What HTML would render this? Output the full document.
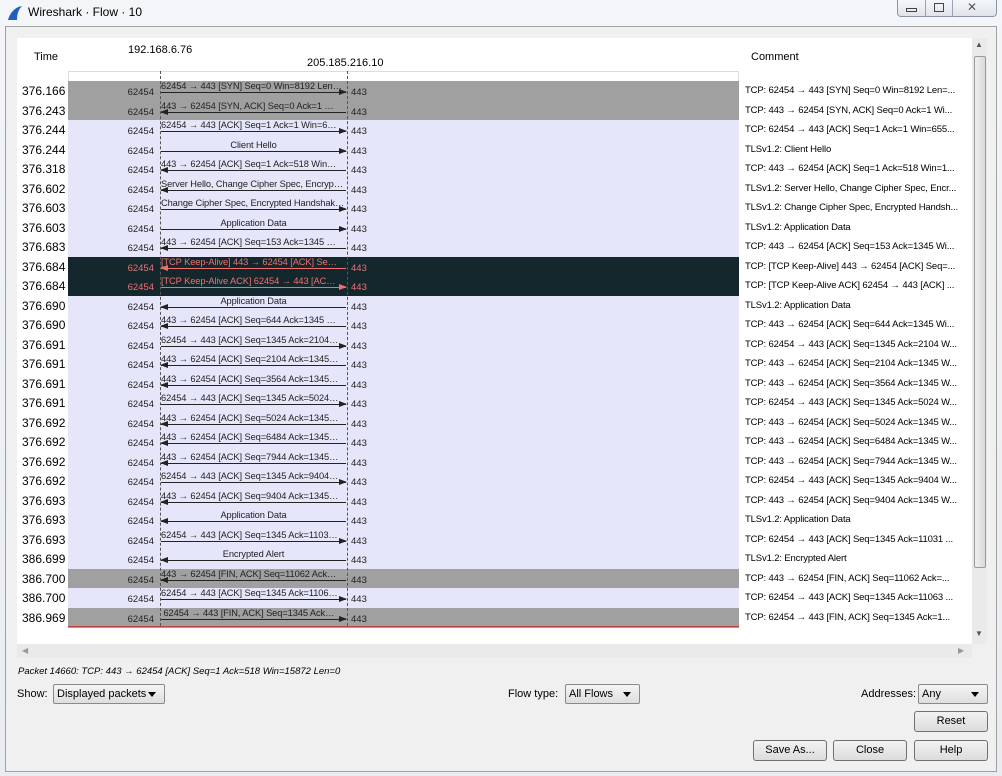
<!DOCTYPE html>
<html><head><meta charset="utf-8"><style>
*{margin:0;padding:0;box-sizing:border-box}
body{width:1002px;height:776px;position:relative;overflow:hidden;background:linear-gradient(#f3f5f8,#e9ecf0);font-family:"Liberation Sans",sans-serif;color:#000}
.abs{position:absolute}
#dlg{position:absolute;left:5px;top:26px;width:992px;height:746px;background:#f0f0f0;border:1px solid #a0a0a0}
#graph{position:absolute;left:17px;top:38px;width:955px;height:606px;background:#fff}
.row{position:absolute;left:0;width:1002px;height:20px}
.band{position:absolute;left:68px;width:671px;top:0;height:20px;background:#e6e6fa}
.g .band{background:#a0a0a0}
.k .band{background:#13272d}
.t{position:absolute;left:22px;top:3px;font-size:12px}
.p1{position:absolute;left:110px;width:44px;text-align:right;top:6px;font-size:9.5px;color:#222}
.p2{position:absolute;left:351px;top:6px;font-size:9.5px;color:#222}
.lb{position:absolute;left:161px;width:185px;top:0;font-size:9.3px;white-space:nowrap;overflow:hidden;color:#222;letter-spacing:-0.1px}
.c .lb{text-align:center}
.ln{position:absolute;left:161px;width:185px;top:11px;height:1px;background:#222}
.ln:after{content:"";position:absolute;top:-3px;border-top:3.5px solid transparent;border-bottom:3.5px solid transparent}
.R .ln:after{right:-1px;border-left:8px solid #222}
.L .ln:after{left:-1px;border-right:8px solid #222}
.k .p1,.k .p2,.k .lb{color:#f07070}
.k .ln{background:#f07070}
.k.R .ln:after{border-left-color:#f07070}
.k.L .ln:after{border-right-color:#f07070}
.cm{position:absolute;left:745px;top:4px;font-size:9.5px;white-space:nowrap;letter-spacing:-0.15px}
.vl{position:absolute;top:71px;height:555px;width:0;border-left:1px dashed #555}
.btn{position:absolute;height:21px;border:1px solid #707070;border-radius:3px;background:linear-gradient(#f2f2f2,#dcdcdc);font-size:11px;text-align:center;line-height:19px}
.cb{position:absolute;height:20px;border:1px solid #8a8a8a;border-radius:2px;background:linear-gradient(#f4f4f4,#dedede);font-size:11px;line-height:18px;padding-left:3px}
.cb:after{content:"";position:absolute;right:8px;top:7px;border-left:4px solid transparent;border-right:4px solid transparent;border-top:5px solid #000}
.lab{position:absolute;font-size:11px}
</style></head><body>
<svg class="abs" style="left:7px;top:5px" width="16" height="16" viewBox="0 0 16 16"><path d="M1 15 C3 8 8 2 15 1 C11 5 10 10 10 15 Z" fill="#1e5fbf"/></svg>
<div class="abs" style="left:28px;top:5px;font-size:12px">Wireshark · Flow · 10</div>
<div class="abs" style="left:897px;top:0;width:100px;height:17px;border:1px solid #8a96a8;border-top:none;border-radius:0 0 4px 4px;background:linear-gradient(#f4f6f9,#dfe4ea)"></div>
<div class="abs" style="left:925px;top:0;width:1px;height:17px;background:#9aa4b2"></div>
<div class="abs" style="left:952px;top:0;width:1px;height:17px;background:#9aa4b2"></div>
<div class="abs" style="left:906px;top:8px;width:11px;height:4px;border:1px solid #444"></div>
<div class="abs" style="left:934px;top:3px;width:10px;height:9px;border:1px solid #444"></div>
<div class="abs" style="left:967px;top:0px;font-size:12px;color:#555">✕</div>
<div id="dlg"></div>
<div id="graph"></div>
<div class="abs" style="left:34px;top:51px;font-size:11px">Time</div>
<div class="abs" style="left:128px;top:44px;font-size:11px">192.168.6.76</div>
<div class="abs" style="left:307px;top:57px;font-size:11px">205.185.216.10</div>
<div class="abs" style="left:751px;top:51px;font-size:11px">Comment</div>
<div class="abs" style="left:68px;top:71px;width:671px;height:10px;border:1px solid #ddd;border-bottom:none;background:#fff"></div>

<div class="row g R" style="top:81px"><div class="band"></div><div class="t">376.166</div><div class="p1">62454</div><div class="p2">443</div><div class="lb">62454 → 443 [SYN] Seq=0 Win=8192 Len…</div><div class="ln"></div><div class="cm">TCP: 62454 → 443 [SYN] Seq=0 Win=8192 Len=...</div></div>
<div class="row g L" style="top:100.5px"><div class="band"></div><div class="t">376.243</div><div class="p1">62454</div><div class="p2">443</div><div class="lb">443 → 62454 [SYN, ACK] Seq=0 Ack=1 …</div><div class="ln"></div><div class="cm">TCP: 443 → 62454 [SYN, ACK] Seq=0 Ack=1 Wi...</div></div>
<div class="row R" style="top:120px"><div class="band"></div><div class="t">376.244</div><div class="p1">62454</div><div class="p2">443</div><div class="lb">62454 → 443 [ACK] Seq=1 Ack=1 Win=6…</div><div class="ln"></div><div class="cm">TCP: 62454 → 443 [ACK] Seq=1 Ack=1 Win=655...</div></div>
<div class="row R c" style="top:139.5px"><div class="band"></div><div class="t">376.244</div><div class="p1">62454</div><div class="p2">443</div><div class="lb">Client Hello</div><div class="ln"></div><div class="cm">TLSv1.2: Client Hello</div></div>
<div class="row L" style="top:159px"><div class="band"></div><div class="t">376.318</div><div class="p1">62454</div><div class="p2">443</div><div class="lb">443 → 62454 [ACK] Seq=1 Ack=518 Win…</div><div class="ln"></div><div class="cm">TCP: 443 → 62454 [ACK] Seq=1 Ack=518 Win=1...</div></div>
<div class="row L" style="top:178.5px"><div class="band"></div><div class="t">376.602</div><div class="p1">62454</div><div class="p2">443</div><div class="lb">Server Hello, Change Cipher Spec, Encryp…</div><div class="ln"></div><div class="cm">TLSv1.2: Server Hello, Change Cipher Spec, Encr...</div></div>
<div class="row R" style="top:198px"><div class="band"></div><div class="t">376.603</div><div class="p1">62454</div><div class="p2">443</div><div class="lb">Change Cipher Spec, Encrypted Handshak…</div><div class="ln"></div><div class="cm">TLSv1.2: Change Cipher Spec, Encrypted Handsh...</div></div>
<div class="row R c" style="top:217.5px"><div class="band"></div><div class="t">376.603</div><div class="p1">62454</div><div class="p2">443</div><div class="lb">Application Data</div><div class="ln"></div><div class="cm">TLSv1.2: Application Data</div></div>
<div class="row L" style="top:237px"><div class="band"></div><div class="t">376.683</div><div class="p1">62454</div><div class="p2">443</div><div class="lb">443 → 62454 [ACK] Seq=153 Ack=1345 …</div><div class="ln"></div><div class="cm">TCP: 443 → 62454 [ACK] Seq=153 Ack=1345 Wi...</div></div>
<div class="row k L" style="top:256.5px"><div class="band"></div><div class="t">376.684</div><div class="p1">62454</div><div class="p2">443</div><div class="lb">[TCP Keep-Alive] 443 → 62454 [ACK] Se…</div><div class="ln"></div><div class="cm">TCP: [TCP Keep-Alive] 443 → 62454 [ACK] Seq=...</div></div>
<div class="row k R" style="top:276px"><div class="band"></div><div class="t">376.684</div><div class="p1">62454</div><div class="p2">443</div><div class="lb">[TCP Keep-Alive ACK] 62454 → 443 [AC…</div><div class="ln"></div><div class="cm">TCP: [TCP Keep-Alive ACK] 62454 → 443 [ACK] ...</div></div>
<div class="row L c" style="top:295.5px"><div class="band"></div><div class="t">376.690</div><div class="p1">62454</div><div class="p2">443</div><div class="lb">Application Data</div><div class="ln"></div><div class="cm">TLSv1.2: Application Data</div></div>
<div class="row L" style="top:315px"><div class="band"></div><div class="t">376.690</div><div class="p1">62454</div><div class="p2">443</div><div class="lb">443 → 62454 [ACK] Seq=644 Ack=1345 …</div><div class="ln"></div><div class="cm">TCP: 443 → 62454 [ACK] Seq=644 Ack=1345 Wi...</div></div>
<div class="row R" style="top:334.5px"><div class="band"></div><div class="t">376.691</div><div class="p1">62454</div><div class="p2">443</div><div class="lb">62454 → 443 [ACK] Seq=1345 Ack=2104…</div><div class="ln"></div><div class="cm">TCP: 62454 → 443 [ACK] Seq=1345 Ack=2104 W...</div></div>
<div class="row L" style="top:354px"><div class="band"></div><div class="t">376.691</div><div class="p1">62454</div><div class="p2">443</div><div class="lb">443 → 62454 [ACK] Seq=2104 Ack=1345…</div><div class="ln"></div><div class="cm">TCP: 443 → 62454 [ACK] Seq=2104 Ack=1345 W...</div></div>
<div class="row L" style="top:373.5px"><div class="band"></div><div class="t">376.691</div><div class="p1">62454</div><div class="p2">443</div><div class="lb">443 → 62454 [ACK] Seq=3564 Ack=1345…</div><div class="ln"></div><div class="cm">TCP: 443 → 62454 [ACK] Seq=3564 Ack=1345 W...</div></div>
<div class="row R" style="top:393px"><div class="band"></div><div class="t">376.691</div><div class="p1">62454</div><div class="p2">443</div><div class="lb">62454 → 443 [ACK] Seq=1345 Ack=5024…</div><div class="ln"></div><div class="cm">TCP: 62454 → 443 [ACK] Seq=1345 Ack=5024 W...</div></div>
<div class="row L" style="top:412.5px"><div class="band"></div><div class="t">376.692</div><div class="p1">62454</div><div class="p2">443</div><div class="lb">443 → 62454 [ACK] Seq=5024 Ack=1345…</div><div class="ln"></div><div class="cm">TCP: 443 → 62454 [ACK] Seq=5024 Ack=1345 W...</div></div>
<div class="row L" style="top:432px"><div class="band"></div><div class="t">376.692</div><div class="p1">62454</div><div class="p2">443</div><div class="lb">443 → 62454 [ACK] Seq=6484 Ack=1345…</div><div class="ln"></div><div class="cm">TCP: 443 → 62454 [ACK] Seq=6484 Ack=1345 W...</div></div>
<div class="row L" style="top:451.5px"><div class="band"></div><div class="t">376.692</div><div class="p1">62454</div><div class="p2">443</div><div class="lb">443 → 62454 [ACK] Seq=7944 Ack=1345…</div><div class="ln"></div><div class="cm">TCP: 443 → 62454 [ACK] Seq=7944 Ack=1345 W...</div></div>
<div class="row R" style="top:471px"><div class="band"></div><div class="t">376.692</div><div class="p1">62454</div><div class="p2">443</div><div class="lb">62454 → 443 [ACK] Seq=1345 Ack=9404…</div><div class="ln"></div><div class="cm">TCP: 62454 → 443 [ACK] Seq=1345 Ack=9404 W...</div></div>
<div class="row L" style="top:490.5px"><div class="band"></div><div class="t">376.693</div><div class="p1">62454</div><div class="p2">443</div><div class="lb">443 → 62454 [ACK] Seq=9404 Ack=1345…</div><div class="ln"></div><div class="cm">TCP: 443 → 62454 [ACK] Seq=9404 Ack=1345 W...</div></div>
<div class="row L c" style="top:510px"><div class="band"></div><div class="t">376.693</div><div class="p1">62454</div><div class="p2">443</div><div class="lb">Application Data</div><div class="ln"></div><div class="cm">TLSv1.2: Application Data</div></div>
<div class="row R" style="top:529.5px"><div class="band"></div><div class="t">376.693</div><div class="p1">62454</div><div class="p2">443</div><div class="lb">62454 → 443 [ACK] Seq=1345 Ack=1103…</div><div class="ln"></div><div class="cm">TCP: 62454 → 443 [ACK] Seq=1345 Ack=11031 ...</div></div>
<div class="row L c" style="top:549px"><div class="band"></div><div class="t">386.699</div><div class="p1">62454</div><div class="p2">443</div><div class="lb">Encrypted Alert</div><div class="ln"></div><div class="cm">TLSv1.2: Encrypted Alert</div></div>
<div class="row g L" style="top:568.5px"><div class="band"></div><div class="t">386.700</div><div class="p1">62454</div><div class="p2">443</div><div class="lb">443 → 62454 [FIN, ACK] Seq=11062 Ack…</div><div class="ln"></div><div class="cm">TCP: 443 → 62454 [FIN, ACK] Seq=11062 Ack=...</div></div>
<div class="row R" style="top:588px"><div class="band"></div><div class="t">386.700</div><div class="p1">62454</div><div class="p2">443</div><div class="lb">62454 → 443 [ACK] Seq=1345 Ack=1106…</div><div class="ln"></div><div class="cm">TCP: 62454 → 443 [ACK] Seq=1345 Ack=11063 ...</div></div>
<div class="row g R" style="top:607.5px"><div class="band"></div><div class="t">386.969</div><div class="p1">62454</div><div class="p2">443</div><div class="lb">&nbsp;62454 → 443 [FIN, ACK] Seq=1345 Ack…</div><div class="ln"></div><div class="cm">TCP: 62454 → 443 [FIN, ACK] Seq=1345 Ack=1...</div></div>
<div class="abs" style="left:68px;top:626px;width:671px;height:1px;background:#c04040"></div>

<div class="vl" style="left:160px"></div>
<div class="vl" style="left:347px"></div>

<div class="abs" style="left:972px;top:38px;width:15px;height:606px;background:#eaeaea"></div>
<div class="abs" style="left:974px;top:56px;width:12px;height:512px;border:1px solid #999;border-radius:2px;background:linear-gradient(90deg,#f0f0f0,#d8d8d8)"></div>
<div class="abs" style="left:975px;top:40px;font-size:8px;color:#555">▲</div>
<div class="abs" style="left:975px;top:629px;font-size:8px;color:#555">▼</div>
<div class="abs" style="left:17px;top:644px;width:955px;height:14px;background:#eaeaea"></div>
<div class="abs" style="left:22px;top:646px;font-size:8px;color:#999">◀</div>
<div class="abs" style="left:958px;top:646px;font-size:8px;color:#999">▶</div>

<div class="abs" style="left:18px;top:666px;font-size:9.5px;font-style:italic">Packet 14660: TCP: 443 → 62454 [ACK] Seq=1 Ack=518 Win=15872 Len=0</div>
<div class="lab" style="left:17px;top:688px">Show:</div>
<div class="cb" style="left:53px;top:684px;width:112px">Displayed packets</div>
<div class="lab" style="left:508px;top:688px">Flow type:</div>
<div class="cb" style="left:565px;top:684px;width:75px">All Flows</div>
<div class="lab" style="left:861px;top:688px">Addresses:</div>
<div class="cb" style="left:918px;top:684px;width:70px">Any</div>
<div class="btn" style="left:914px;top:711px;width:74px">Reset</div>
<div class="btn" style="left:753px;top:740px;width:74px">Save As...</div>
<div class="btn" style="left:833px;top:740px;width:74px">Close</div>
<div class="btn" style="left:914px;top:740px;width:74px">Help</div>
</body></html>
